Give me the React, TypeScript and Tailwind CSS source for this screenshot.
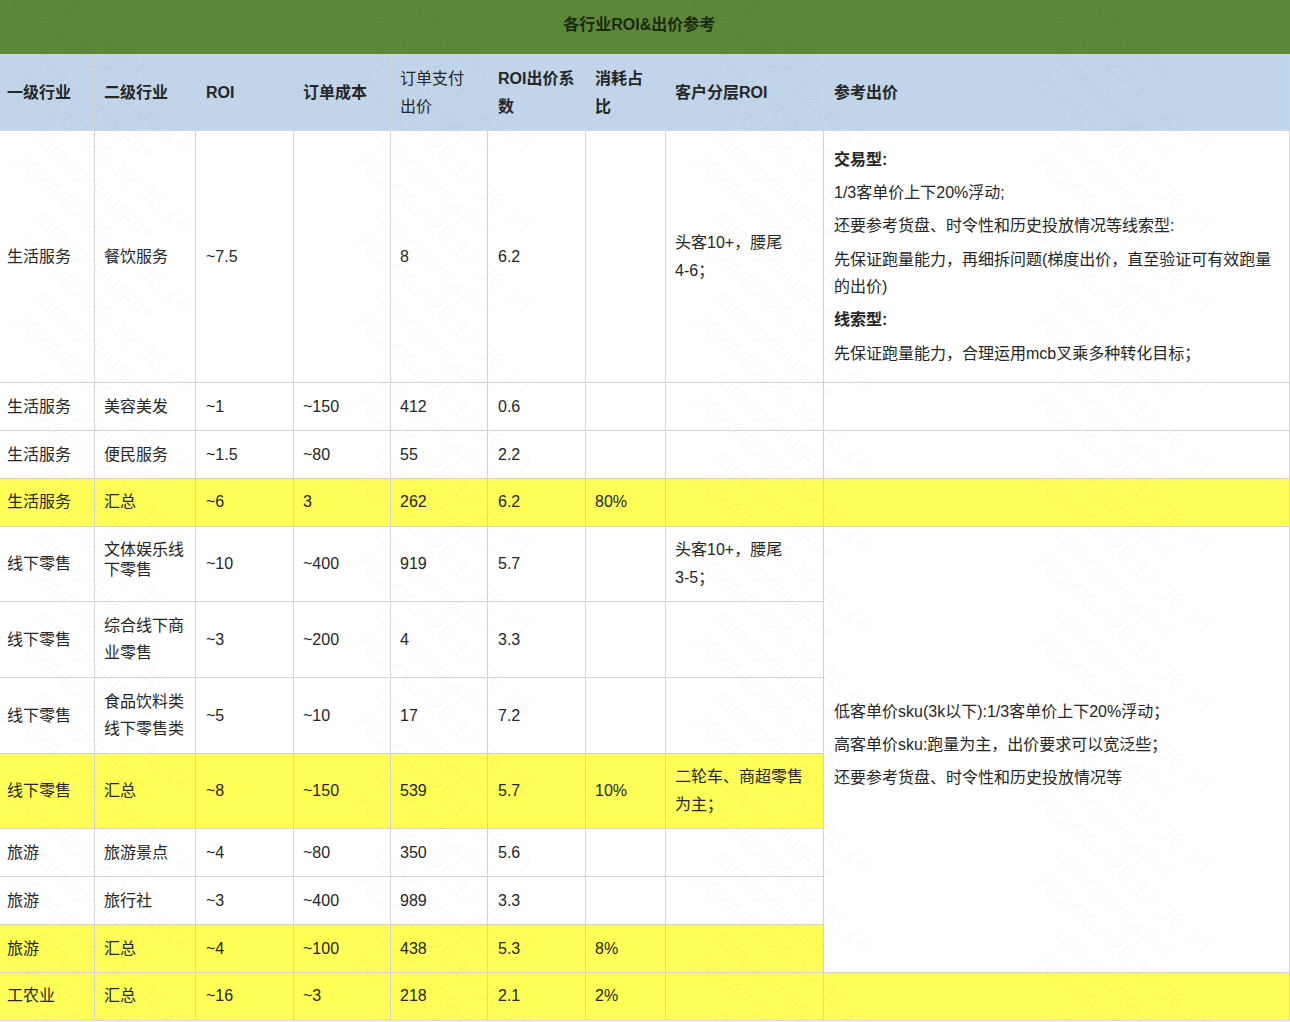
const font = "font-['Liberation_Sans','Noto_Sans_CJK_SC',sans-serif]";

type Row = {
  cells: string[];
  h: string;
  yellow?: boolean;
  nudge?: boolean;
};

const rows: Row[] = [
  { cells: ['生活服务', '美容美发', '~1', '~150', '412', '0.6', '', ''], h: 'h-[48px]', nudge: true },
  { cells: ['生活服务', '便民服务', '~1.5', '~80', '55', '2.2', '', ''], h: 'h-[48px]', nudge: true },
  { cells: ['生活服务', '汇总', '~6', '3', '262', '6.2', '80%', ''], h: 'h-[48px]', yellow: true },
];

const rows2: Row[] = [
  { cells: ['线下零售', '综合线下商业零售', '~3', '~200', '4', '3.3', '', ''], h: 'h-[76px]', nudge: true },
  { cells: ['线下零售', '食品饮料类线下零售类', '~5', '~10', '17', '7.2', '', ''], h: 'h-[76px]', nudge: true },
  { cells: ['线下零售', '汇总', '~8', '~150', '539', '5.7', '10%', '二轮车、商超零售为主；'], h: 'h-[75px]', yellow: true },
  { cells: ['旅游', '旅游景点', '~4', '~80', '350', '5.6', '', ''], h: 'h-[48px]', nudge: true },
  { cells: ['旅游', '旅行社', '~3', '~400', '989', '3.3', '', ''], h: 'h-[48px]', nudge: true },
  { cells: ['旅游', '汇总', '~4', '~100', '438', '5.3', '8%', ''], h: 'h-[48px]', yellow: true, nudge: true },
];

const td = 'border border-[#d4d4d4] px-[9px] align-middle break-words';
const tdWide = 'border border-[#d4d4d4] pl-[10px] pr-[8px] align-middle break-words';
const tdFirst = 'border border-[#d4d4d4] border-l-0 pl-[7px] pr-[9px] align-middle';
const yellow = 'bg-[#ffff57]';

function cellClass(i: number) {
  if (i === 0) return tdFirst;
  if (i === 2 || i === 5) return tdWide;
  return td;
}

function longClass(row: Row) {
  return row.yellow ? 'leading-[28px] pt-[1px]' : 'leading-[27px]';
}

function Cells({ row }: { row: Row }) {
  return (
    <>
      {row.cells.map((c, i) => (
        <td
          key={i}
          className={`${cellClass(i)} ${row.yellow ? yellow : ''} ${
            c.length > 6 ? longClass(row) : row.nudge ? 'pt-[2px]' : ''
          }`}
        >
          {c}
        </td>
      ))}
    </>
  );
}

function Watermark() {
  const marks = [];
  for (let y = -38; y < 1040; y += 80) {
    for (let x = -292; x < 1290; x += 340) {
      marks.push(
        <div
          key={`${x}-${y}`}
          className="absolute origin-top-left rotate-[42deg] text-[25px] leading-[30px] text-[#000000]/[0.026] whitespace-nowrap"
          style={{ left: x, top: y }}
        >
          <div>miaoyonggan</div>
          <div>2024/07/29 12:36:14</div>
        </div>,
      );
    }
  }
  return <div className="absolute inset-0 overflow-hidden pointer-events-none">{marks}</div>;
}

export default function App() {
  return (
    <div className={`relative w-[1290px] h-[1022px] overflow-hidden bg-white text-[16px] text-[#262626] ${font}`}>
      <table className="table-fixed border-collapse w-[1290px]">
        <colgroup>
          <col className="w-[94.5px]" />
          <col className="w-[101px]" />
          <col className="w-[98px]" />
          <col className="w-[97px]" />
          <col className="w-[97px]" />
          <col className="w-[98px]" />
          <col className="w-[80px]" />
          <col className="w-[158px]" />
          <col />
        </colgroup>
        <tbody>
          <tr className="h-[54px] bg-[#5b8838]">
            <td colSpan={9} className="pb-[3px] pr-[11px] text-center font-bold text-[#1d2a12]">
              各行业ROI&amp;出价参考
            </td>
          </tr>
          <tr className="h-[76px] bg-[#c0d5ea] font-bold leading-[28px]">
            <td className={`${tdFirst} pt-[2px]`}>一级行业</td>
            <td className={`${td} pt-[2px]`}>二级行业</td>
            <td className={`${tdWide} pt-[2px]`}>ROI</td>
            <td className={`${td} pt-[2px]`}>订单成本</td>
            <td className={`${td} pt-[2px] font-normal`}>订单支付出价</td>
            <td className={`${tdWide} pt-[2px]`}>ROI出价系数</td>
            <td className={`${td} pt-[2px]`}>消耗占比</td>
            <td className={`${td} pt-[2px]`}>客户分层ROI</td>
            <td className={`${tdWide} pt-[2px]`}>参考出价</td>
          </tr>
          <tr className="h-[252px]">
            <td className={`${tdFirst} pt-[2px]`}>生活服务</td>
            <td className={`${td} pt-[2px]`}>餐饮服务</td>
            <td className={`${tdWide} pt-[2px]`}>~7.5</td>
            <td className={td}></td>
            <td className={`${td} pt-[2px]`}>8</td>
            <td className={`${tdWide} pt-[2px]`}>6.2</td>
            <td className={td}></td>
            <td className={`${td} pt-[2px] leading-[28px]`}>
              头客10+，腰尾
              <br />
              4-6；
            </td>
            <td className={`${tdWide} pt-[1px] leading-[28px]`}>
              <div className="flex flex-col gap-[5px]">
                <p className="font-bold">交易型:</p>
                <p>1/3客单价上下20%浮动;</p>
                <p>还要参考货盘、时令性和历史投放情况等线索型:</p>
                <p className="mt-[1px] mb-[1px] leading-[27px]">先保证跑量能力，再细拆问题(梯度出价，直至验证可有效跑量的出价)</p>
                <p className="font-bold">线索型:</p>
                <p className="mt-[1px]">先保证跑量能力，合理运用mcb叉乘多种转化目标；</p>
              </div>
            </td>
          </tr>
          {rows.map((r, i) => (
            <tr key={i} className={r.h}>
              <Cells row={r} />
              <td className={`${td} ${r.yellow ? yellow : ''}`}></td>
            </tr>
          ))}
          <tr className="h-[75px]">
            <td className={tdFirst}>线下零售</td>
            <td className={`${td} pb-[8px] leading-[20px]`}>文体娱乐线下零售</td>
            <td className={tdWide}>~10</td>
            <td className={td}>~400</td>
            <td className={td}>919</td>
            <td className={tdWide}>5.7</td>
            <td className={td}></td>
            <td className={`${td} leading-[28px]`}>
              头客10+，腰尾
              <br />
              3-5；
            </td>
            <td rowSpan={7} className={`${tdWide} pb-[9px] leading-[28px]`}>
              <div className="flex flex-col gap-[5px]">
                <p>低客单价sku(3k以下):1/3客单价上下20%浮动；</p>
                <p>高客单价sku:跑量为主，出价要求可以宽泛些；</p>
                <p>还要参考货盘、时令性和历史投放情况等</p>
              </div>
            </td>
          </tr>
          {rows2.map((r, i) => (
            <tr key={i} className={r.h}>
              <Cells row={r} />
            </tr>
          ))}
          <tr className={`h-[48px] ${yellow}`}>
            <td className={tdFirst}>工农业</td>
            <td className={td}>汇总</td>
            <td className={tdWide}>~16</td>
            <td className={td}>~3</td>
            <td className={td}>218</td>
            <td className={tdWide}>2.1</td>
            <td className={td}>2%</td>
            <td className={td}></td>
            <td className={td}></td>
          </tr>
        </tbody>
      </table>
      <Watermark />
    </div>
  );
}
